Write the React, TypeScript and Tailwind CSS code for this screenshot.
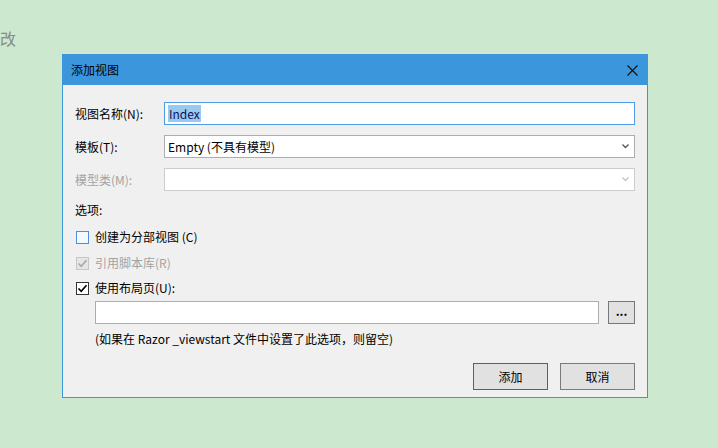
import { useState } from 'react';

const font = "font-['Segoe_UI','Noto_Sans_CJK_SC',sans-serif]";

function Chevron({ disabled }: { disabled?: boolean }) {
    return (
        <svg width="7" height="5" viewBox="0 0 7 5" className="shrink-0">
            <path
                d="M0.5 0.5 L3.5 3.5 L6.5 0.5"
                fill="none"
                stroke={disabled ? '#c4c4c4' : '#555555'}
                strokeWidth="1.3"
            />
        </svg>
    );
}

function Check({ color }: { color: string }) {
    return (
        <svg width="11" height="11" viewBox="0 0 11 11">
            <path
                d="M1.5 5.5 L4.2 8.3 L9.5 2.3"
                fill="none"
                stroke={color}
                strokeWidth="1.7"
            />
        </svg>
    );
}

interface FieldRowProps {
    label: string;
    disabled?: boolean;
    children: React.ReactNode;
}

function FieldRow({ label, disabled, children }: FieldRowProps) {
    return (
        <div className="flex h-[23px] items-center">
            <div
                className={`w-[89px] shrink-0 text-[12px] ${disabled ? 'text-[#a3a3a3]' : 'text-black'}`}
            >
                {label}
            </div>
            {children}
        </div>
    );
}

export default function App() {
    const [partial, setPartial] = useState(false);
    const [useLayout, setUseLayout] = useState(true);

    return (
        <div
            className={`h-[448px] w-[718px] overflow-hidden bg-[#cce8cf] ${font}`}
        >
            <div className="mt-[29px] h-[18px] text-[16px] leading-[18px] text-[#8a8a8a]">
                改
            </div>

            <div className="ml-[62px] mt-[7px] flex h-[344px] w-[586px] flex-col border border-[#3c96dc] bg-[#f0f0f0]">
                {/* title bar */}
                <div className="flex h-[30px] shrink-0 items-center justify-between bg-[#3c96dc] pl-[8px] pr-[9px]">
                    <span className="text-[12px] text-black">添加视图</span>
                    <svg width="11" height="11" viewBox="0 0 11 11">
                        <path
                            d="M0.5 0.5 L10.5 10.5 M10.5 0.5 L0.5 10.5"
                            stroke="#111111"
                            strokeWidth="1.1"
                        />
                    </svg>
                </div>

                <div className="flex flex-col px-[12px] pt-[17px] text-[12px] text-black">
                    <FieldRow label="视图名称(N):">
                        <div className="flex h-[23px] flex-1 items-center border border-[#4f9ce6] bg-white pl-[3px]">
                            <span className="bg-[#99c9ef] px-[1px] leading-[17px] text-[#10105a]">
                                Index
                            </span>
                        </div>
                    </FieldRow>

                    <div className="mt-[10px]">
                        <FieldRow label="模板(T):">
                            <div className="flex h-[23px] flex-1 items-center justify-between border border-[#adadad] bg-white pl-[3px] pr-[5px]">
                                <span>Empty (不具有模型)</span>
                                <Chevron />
                            </div>
                        </FieldRow>
                    </div>

                    <div className="mt-[10px]">
                        <FieldRow label="模型类(M):" disabled>
                            <div className="flex h-[23px] flex-1 items-center justify-end border border-[#cccccc] bg-white pr-[5px]">
                                <Chevron disabled />
                            </div>
                        </FieldRow>
                    </div>

                    <div className="mt-[11px] h-[16px] leading-[16px]">选项:</div>

                    <label className="ml-[1px] mt-[11px] flex h-[16px] items-center gap-[6px]">
                        <button
                            type="button"
                            onClick={() => setPartial(!partial)}
                            className="flex h-[13px] w-[13px] items-center justify-center border border-[#4a8fe0] bg-[#f4f8ff]"
                        >
                            {partial && <Check color="#000" />}
                        </button>
                        <span>创建为分部视图 (C)</span>
                    </label>

                    <div className="ml-[1px] mt-[10px] flex h-[16px] items-center gap-[6px] text-[#a3a3a3]">
                        <div className="flex h-[13px] w-[13px] items-center justify-center border border-[#c6c6c6] bg-[#e6e6e6]">
                            <Check color="#a8a8a8" />
                        </div>
                        <span>引用脚本库(R)</span>
                    </div>

                    <label className="ml-[1px] mt-[9px] flex h-[16px] items-center gap-[6px]">
                        <button
                            type="button"
                            onClick={() => setUseLayout(!useLayout)}
                            className="flex h-[13px] w-[13px] items-center justify-center border border-[#333333] bg-white"
                        >
                            {useLayout && <Check color="#000" />}
                        </button>
                        <span>使用布局页(U):</span>
                    </label>

                    <div className="ml-[20px] mt-[5px] flex h-[23px] gap-[9px]">
                        <div className="h-[23px] flex-1 border border-[#adadad] bg-white" />
                        <button
                            type="button"
                            className="flex h-[23px] w-[27px] items-center justify-center border border-[#777777] bg-[#e1e1e1] pb-[4px] text-[12px] font-bold leading-none"
                        >
                            ...
                        </button>
                    </div>

                    <div className="ml-[20px] mt-[7px] h-[16px] leading-[16px]">
                        (如果在 Razor _viewstart 文件中设置了此选项，则留空)
                    </div>

                    <div className="mt-[16px] flex justify-end gap-[12px]">
                        <button
                            type="button"
                            className="h-[27px] w-[75px] border border-[#0078d7] bg-[#e1e1e1] text-[12px]"
                        >
                            添加
                        </button>
                        <button
                            type="button"
                            className="h-[27px] w-[75px] border border-[#7a7a7a] bg-[#e1e1e1] text-[12px]"
                        >
                            取消
                        </button>
                    </div>
                </div>
            </div>
        </div>
    );
}
